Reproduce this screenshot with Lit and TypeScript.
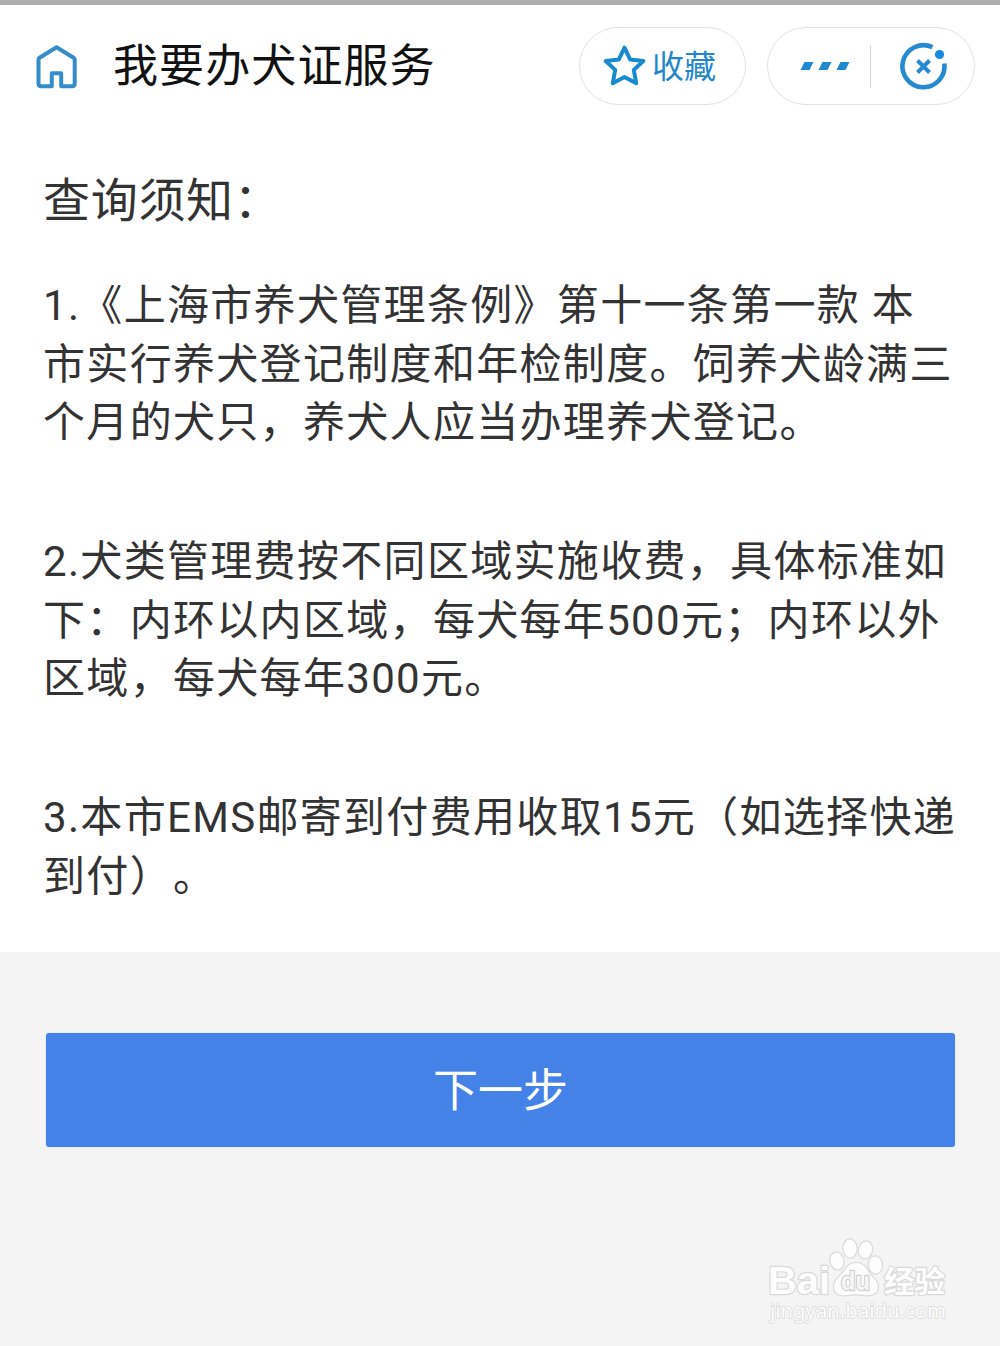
import { LitElement, html, css } from "lit";
import { customElement } from "lit/decorators.js";

const NOTICES: string[][] = [
  [
    "1.《上海市养犬管理条例》第十一条第一款 本",
    "市实行养犬登记制度和年检制度。饲养犬龄满三",
    "个月的犬只，养犬人应当办理养犬登记。",
  ],
  [
    "2.犬类管理费按不同区域实施收费，具体标准如",
    "下：内环以内区域，每犬每年500元；内环以外",
    "区域，每犬每年300元。",
  ],
  ["3.本市EMS邮寄到付费用收取15元（如选择快递", "到付）。"],
];

@customElement("title-bar")
export class TitleBar extends LitElement {
  static styles = css`
    :host {
      display: flex;
      align-items: center;
      height: 122px;
      box-sizing: border-box;
      padding: 0 25px 0 34px;
      background: #fff;
    }
    svg {
      display: block;
      flex: none;
    }
    .title {
      margin: 2px 0 0 33px;
      flex: 1;
      font-size: 45px;
      font-weight: 400;
      letter-spacing: 1.1px;
      line-height: 60px;
      color: #111;
      white-space: nowrap;
    }
    .pill {
      display: flex;
      align-items: center;
      box-sizing: border-box;
      height: 78px;
      border: 1px solid #e2e2e2;
      border-radius: 39px;
      background: #fff;
    }
    .favourite {
      width: 167px;
      padding-left: 23px;
      gap: 6px;
      margin-right: 21px;
      font-size: 32px;
      line-height: 40px;
      color: #2487cb;
      white-space: nowrap;
    }
    .favourite span {
      padding-top: 2px;
    }
    .controls {
      width: 208px;
      padding-left: 32px;
    }
    .divider {
      width: 1px;
      height: 43px;
      margin: 0 29px 0 20px;
      background: #d6d6d6;
    }
  `;

  render() {
    return html`
      <svg width="46" height="48" viewBox="0 0 46 48" fill="none" stroke="#348ccb" stroke-width="4" stroke-linejoin="round" stroke-linecap="round">
        <path d="M17.800 44.300V31.200H27.200V44.300H38Q40.700 44.300 40.700 41.600V17.500Q40.700 16.400 39.600 15.700L22.500 5.200L5.600 15.700Q4.500 16.400 4.500 17.500V41.600Q4.500 44.300 7.200 44.300H17" />
      </svg>
      <h1 class="title">我要办犬证服务</h1>
      <div class="pill favourite">
        <svg width="43" height="42" viewBox="0 0 43 42" fill="none" stroke="#188bd0" stroke-width="4" stroke-linejoin="round">
          <path d="M21.500 2.700L27.100 14.400L40.300 16L30.800 24.900L33.200 38.200L21.500 32L9.800 38.200L12.200 24.900L2.700 16L15.900 14.400Z" />
        </svg>
        <span>收藏</span>
      </div>
      <div class="pill controls">
        <svg width="50" height="10" viewBox="0 0 50 10" fill="#1f88d2">
          <path d="M4.500 1H13.500L9.500 9H0.500ZM22.500 1H31.500L27.500 9H18.500ZM40.500 1H49.500L45.500 9H36.500Z" />
        </svg>
        <div class="divider"></div>
        <svg width="48" height="48" viewBox="0 0 48 48" fill="none" stroke="#258ad0">
          <path d="M32.400 5.200A21 21 0 1 0 44.300 21.500" stroke-width="4.600" />
          <path d="M17.500 18.500L29.500 30.500M29.500 18.500L17.500 30.500" stroke-width="4" />
          <circle cx="39.500" cy="12.500" r="4.600" fill="#168adf" stroke="none" />
        </svg>
      </div>
    `;
  }
}

@customElement("site-watermark")
export class SiteWatermark extends LitElement {
  static styles = css`
    :host {
      display: block;
      width: 190px;
      height: 92px;
    }
    svg {
      display: block;
    }
    .mark {
      fill: #fdfdfd;
      stroke: #d9d9d9;
      stroke-width: 2.4px;
      paint-order: stroke;
      stroke-linejoin: round;
    }
    .latin {
      font: 700 39px "Liberation Sans", sans-serif;
    }
    .inner {
      font: 700 26px "Liberation Sans", sans-serif;
      fill: #f6f6f6;
      stroke: #cfcfcf;
    }
    .han {
      font: 700 30px "Noto Sans CJK SC", sans-serif;
    }
    .address {
      font: 400 20px "Noto Sans", sans-serif;
      stroke-width: 1.6px;
    }
  `;

  render() {
    return html`
      <svg width="190" height="92" viewBox="0 0 190 92">
        <text class="mark latin" x="2" y="58" textLength="62" lengthAdjust="spacingAndGlyphs">Bai</text>
        <ellipse class="mark" cx="71" cy="25" rx="6.500" ry="8.500" transform="rotate(-12 71 25)" />
        <ellipse class="mark" cx="84" cy="12.500" rx="6.500" ry="9" transform="rotate(-4 84 12.500)" />
        <ellipse class="mark" cx="99.500" cy="14" rx="6.500" ry="8.500" transform="rotate(12 99.500 14)" />
        <ellipse class="mark" cx="109.500" cy="29" rx="6.500" ry="8.500" transform="rotate(-4 109.500 29)" />
        <path class="mark" d="M90 27C82 27 80 33 75 39C71 43 68 46 68 51C68 58 74 60 81 59Q90 57.500 99 59C106 60 112 57 112 51C112 45 107 42 104 38C100 32 98 27 90 27Z" />
        <text class="mark inner" x="75" y="54" textLength="29" lengthAdjust="spacingAndGlyphs">du</text>
        <text class="mark han" x="118" y="56" textLength="61" lengthAdjust="spacingAndGlyphs">经验</text>
        <text class="mark address" x="4" y="82" textLength="176" lengthAdjust="spacingAndGlyphs">jingyan.baidu.com</text>
      </svg>
    `;
  }
}

@customElement("app-root")
export class AppRoot extends LitElement {
  static styles = css`
    :host {
      display: flex;
      flex-direction: column;
      position: relative;
      height: 1346px;
      overflow: hidden;
      box-sizing: border-box;
      border-top: 5px solid #afafaf;
      background: #f4f4f4;
      font-family: Roboto, "Noto Sans CJK SC", sans-serif;
      text-spacing-trim: space-all;
    }
    .notice {
      box-sizing: border-box;
      height: 825px;
      padding: 44px 0 0 43px;
      background: #fff;
      color: #333;
    }
    .heading {
      margin: 0 0 46px;
      font-size: 47px;
      font-weight: 400;
      letter-spacing: 0.7px;
      line-height: 60px;
    }
    .para {
      margin: 0 0 80.500px;
      font-size: 42px;
      letter-spacing: 1.32px;
      line-height: 58.500px;
      white-space: nowrap;
    }
    .line {
      display: block;
    }
    .actions {
      display: flex;
      padding: 81px 45px 0 46px;
    }
    .next {
      flex: 1;
      height: 114px;
      padding: 0 0 6px;
      border: 0;
      border-radius: 3px;
      background: #4482e8;
      box-shadow: 0 0 2px #c9e2f5;
      color: #fff;
      font: inherit;
      font-size: 45px;
    }
    .watermark {
      position: absolute;
      right: 44px;
      bottom: 18px;
    }
  `;

  render() {
    return html`
      <title-bar></title-bar>
      <section class="notice">
        <h2 class="heading">查询须知：</h2>
        ${NOTICES.map(
          (lines) => html`<p class="para">${lines.map((line) => html`<span class="line">${line}</span>`)}</p>`
        )}
      </section>
      <div class="actions"><button class="next">下一步</button></div>
      <site-watermark class="watermark"></site-watermark>
    `;
  }
}
